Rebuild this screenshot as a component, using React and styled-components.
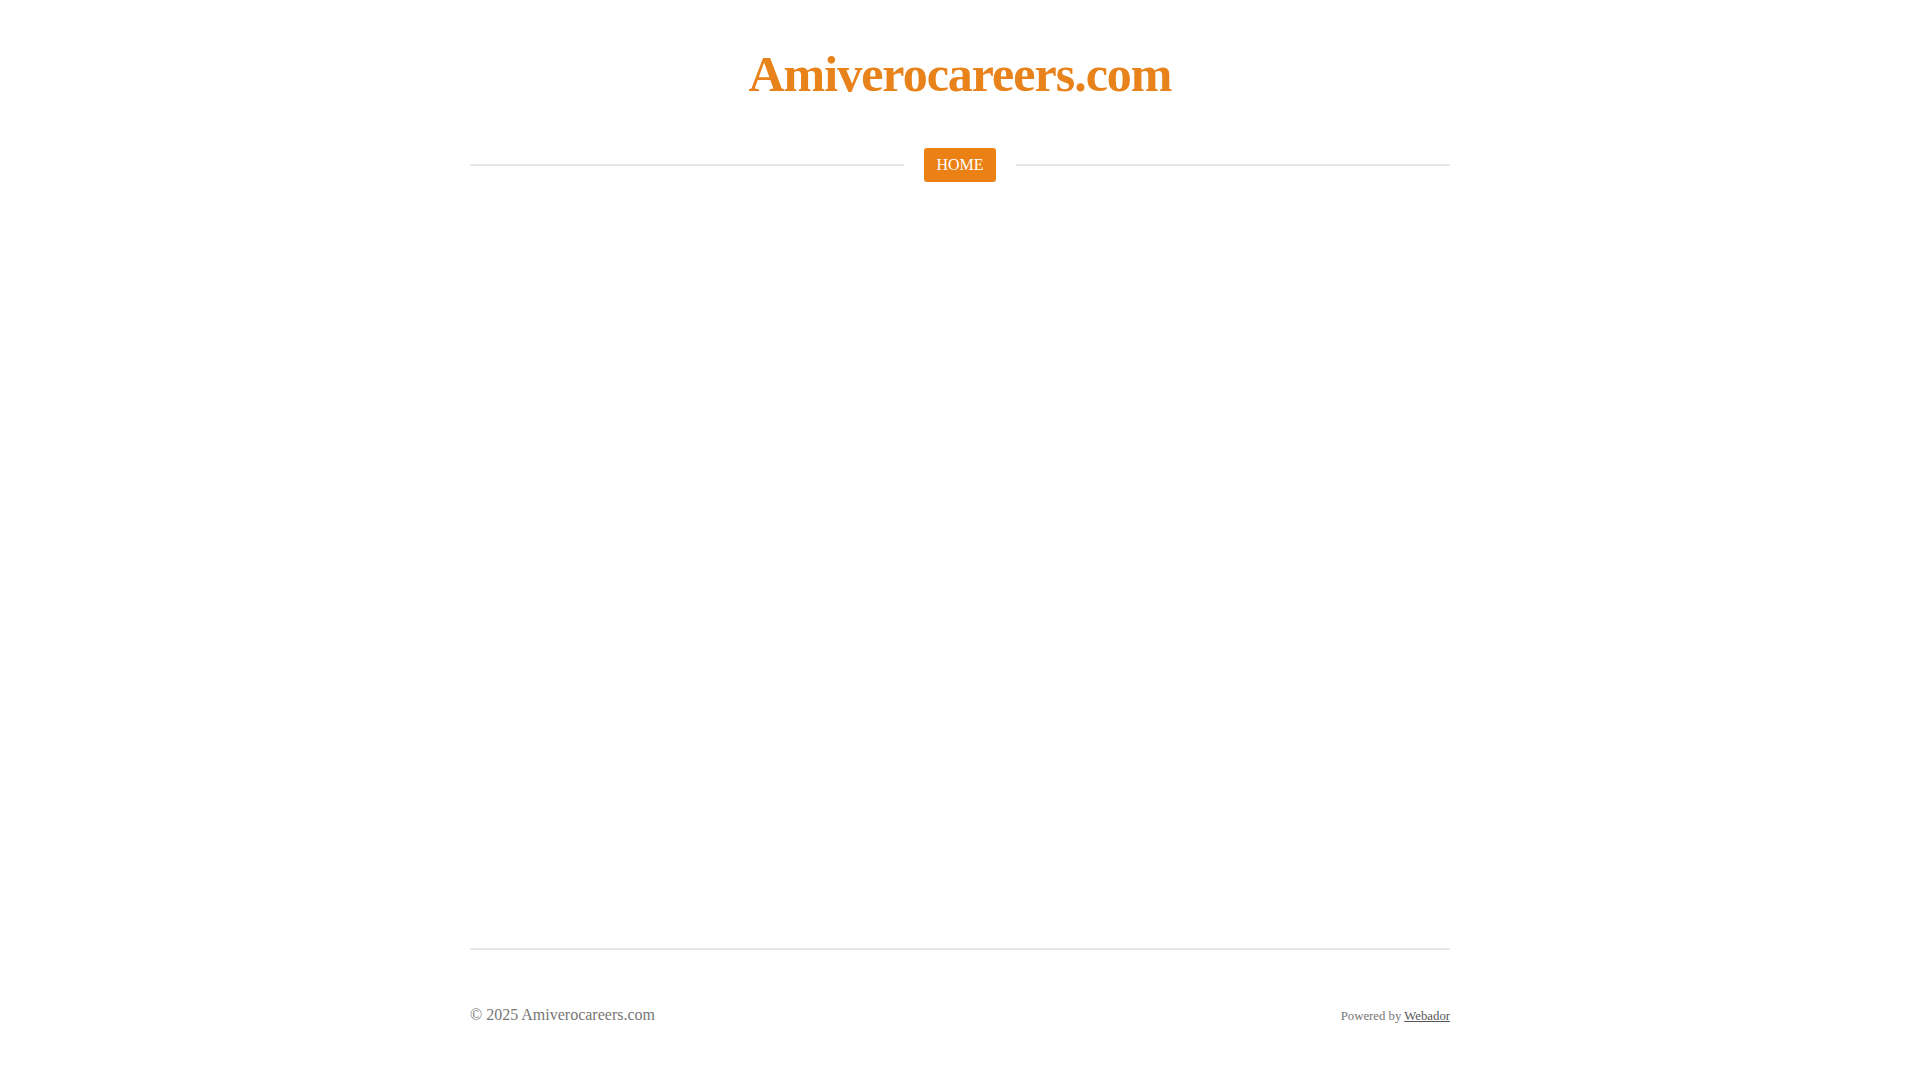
import React from "react";
import styled, { createGlobalStyle } from "styled-components";

const Global = createGlobalStyle`
  html, body { margin: 0; padding: 0; background: #ffffff; }
  body { font-family: "Liberation Serif", "Times New Roman", serif; }
`;

const Page = styled.div`
  width: 980px;
  margin: 0 auto;
`;

const Header = styled.header`
  padding-top: 45px;
  text-align: center;
`;

const Title = styled.h1`
  margin: 0;
  font-family: "Liberation Serif", "Times New Roman", serif;
  font-weight: 700;
  font-size: 50px;
  line-height: 58px;
  letter-spacing: -1px;
  color: #e8821a;
`;

const Nav = styled.nav`
  margin-top: 45px;
  display: flex;
  align-items: center;
  gap: 20px;
`;

const Rule = styled.div`
  flex: 1;
  height: 2px;
  background: #e6e6e6;
`;

const NavButton = styled.a`
  display: block;
  padding: 8px 12px;
  line-height: 18px;
  font-size: 16px;
  color: #ffffff;
  background: #eb8115;
  border-radius: 3px;
  text-decoration: none;
  font-family: "Liberation Serif", "Times New Roman", serif;
`;

const Main = styled.main`
  height: 766px;
`;

const Footer = styled.footer`
  border-top: 2px solid #e6e6e6;
  padding-top: 56px;
  display: flex;
  justify-content: space-between;
  align-items: baseline;
`;

const Copy = styled.div`
  font-size: 16px;
  color: #777777;
`;

const Powered = styled.div`
  font-size: 12.75px;
  color: #777777;
`;

const PoweredLink = styled.a`
  color: #555555;
  text-decoration: underline;
`;

export default function App() {
  return (
    <>
      <Global />
      <Page>
        <Header>
          <Title>Amiverocareers.com</Title>
        </Header>
        <Nav>
          <Rule />
          <NavButton href="#">HOME</NavButton>
          <Rule />
        </Nav>
        <Main />
        <Footer>
          <Copy>© 2025 Amiverocareers.com</Copy>
          <Powered>
            Powered by <PoweredLink href="#">Webador</PoweredLink>
          </Powered>
        </Footer>
      </Page>
    </>
  );
}
